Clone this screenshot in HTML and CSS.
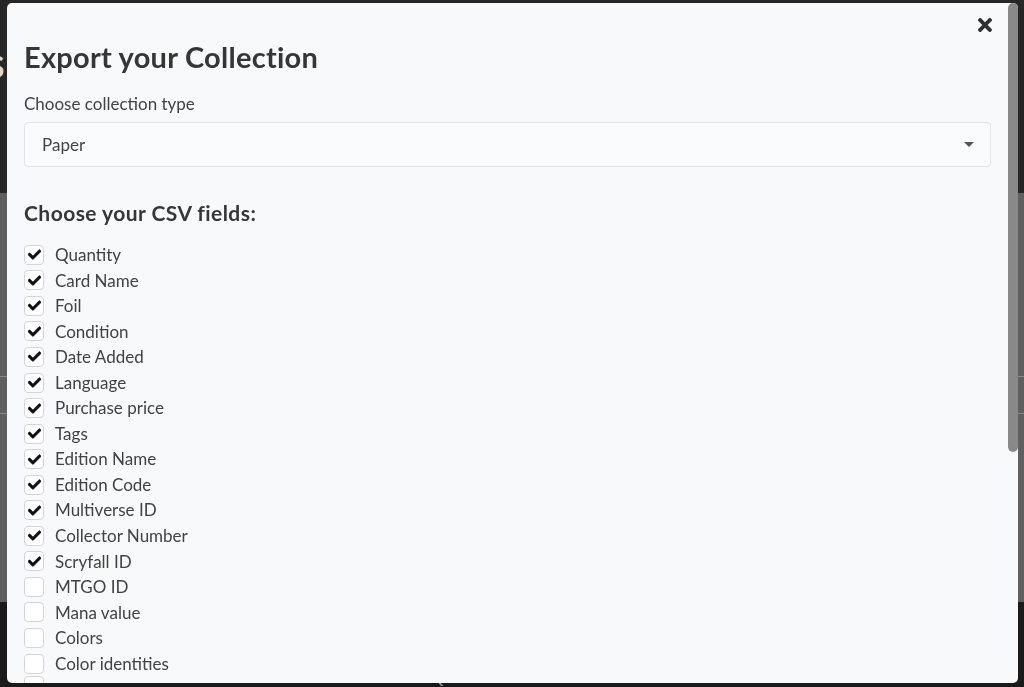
FILE: index.html
```html
<!DOCTYPE html>
<html lang="en">
<head>
    <meta charset="UTF-8">
    <meta name="viewport" content="width=device-width, initial-scale=1.0">
    <title>Export your Collection</title>
    <link rel="stylesheet" href="styles.css">
</head>
<body>
    <!-- page behind the modal -->
    <div class="page">
        <div class="page-top"><span class="page-logo">S</span></div>
        <div class="page-mid">
            <div class="page-row"></div>
            <div class="page-row"></div>
        </div>
        <div class="page-foot">
            <a>ABOUT</a>
            <a>FAQ</a>
            <a>CONTACT</a>
            <a>SUPPORT US</a>
        </div>
    </div>

    <div class="modal">
        <div class="modal-body">
            <button class="close" type="button" aria-label="Close">
                <svg viewBox="0 80 352 352" width="14" height="14"><path d="M242.72 256l100.07-100.07c12.28-12.28 12.28-32.19 0-44.48l-22.24-22.24c-12.28-12.28-32.19-12.28-44.480 0L176 189.28 75.93 89.21c-12.28-12.28-32.19-12.28-44.48 0L9.21 111.45c-12.28 12.28-12.28 32.19 0 44.48L109.28 256 9.21 356.07c-12.28 12.28-12.28 32.19 0 44.48l22.24 22.24c12.28 12.28 32.2 12.28 44.48 0L176 322.72l100.07 100.07c12.28 12.28 32.2 12.28 44.48 0l22.24-22.24c12.28-12.28 12.28-32.19 0-44.48L242.72 256z"/></svg>
            </button>

            <h3 class="modal-title">Export your Collection</h3>

            <label class="field-label">Choose collection type</label>
            <div class="select">
                <span>Paper</span>
                <span class="caret"></span>
            </div>

            <h4 class="section-title">Choose your CSV fields:</h4>
            <ul class="fields" id="fields">
                <!-- filled by the script below -->
            </ul>
        </div>
        <div class="scrollbar"><div class="thumb"></div></div>
    </div>

    <script>
        const fields = [
            ["Quantity", true], ["Card Name", true], ["Foil", true], ["Condition", true],
            ["Date Added", true], ["Language", true], ["Purchase price", true], ["Tags", true],
            ["Edition Name", true], ["Edition Code", true], ["Multiverse ID", true],
            ["Collector Number", true], ["Scryfall ID", true], ["MTGO ID", false],
            ["Mana value", false], ["Colors", false], ["Color identities", false],
            ["", false]
        ];
        const check = '<svg viewBox="0 0 512 512" width="13" height="13"><path d="M173.898 439.404l-166.4-166.4c-9.997-9.997-9.997-26.206 0-36.204l36.203-36.204c9.997-9.998 26.207-9.998 36.204 0L192 312.69 432.095 72.596c9.997-9.997 26.207-9.997 36.204 0l36.203 36.204c9.997 9.997 9.997 26.206 0 36.204l-294.4 294.401c-9.998 9.997-26.207 9.997-36.204-.001z"/></svg>';
        const list = document.getElementById("fields");
        fields.forEach(function(f) {
            const li = document.createElement("li");
            li.className = "field";
            li.innerHTML = '<span class="box">' + (f[1] ? check : "") + '</span><span>' + f[0] + '</span>';
            list.appendChild(li);
        });
    </script>
</body>
</html>
```

FILE: styles.css
```css
body {
    margin: 0;
    font-family: Lato, "Liberation Sans", sans-serif;
    background-color: #1b1b1b;
    overflow: hidden;
}
.page {
    height: 687px;
    display: flex;
    flex-direction: column;
}
.page-top {
    height: 200px;
    background-color: #272727;
    padding: 48px 0 0 0;
    box-sizing: border-box;
}
.page-logo {
    color: #d8d8d8;
    font-size: 30px;
    font-weight: 700;
    margin-left: -12px;
}
.page-mid {
    height: 420px;
    background-color: #5f5f5f;
    padding-top: 183px;
    box-sizing: border-box;
}
.page-row {
    height: 36px;
    border-top: 1px solid #8a8a8a;
}
.page-foot {
    flex: 1;
    background-color: #1a1a1a;
    display: flex;
    gap: 60px;
    padding: 63px 0 0 265px;
    color: #9a9a9a;
    font-size: 18px;
    letter-spacing: 3px;
}
.modal {
    position: fixed;
    top: 3px;
    left: 7px;
    width: 1011px;
    height: 680px;
    display: flex;
    background-color: #f8f9fa;
    border-radius: 5px;
    overflow: hidden;
    color: #424242;
}
.modal-body {
    flex: 1;
    position: relative;
    padding: 17px;
    overflow: hidden;
}
.scrollbar {
    width: 10px;
}
.thumb {
    height: 449px;
    background-color: #898989;
    border-radius: 5px;
}
.close {
    position: absolute;
    top: 15px;
    right: 16px;
    padding: 0;
    border: none;
    background: none;
    fill: #2f2f2f;
    line-height: 0;
    cursor: pointer;
}
.modal-title {
    margin: 20px 0 17px;
    font-size: 29px;
    line-height: 34px;
    font-weight: 700;
    letter-spacing: 0.25px;
    color: #363636;
}
.field-label {
    display: block;
    font-size: 17px;
    line-height: 25px;
    margin-bottom: 6px;
}
.select {
    height: 45px;
    box-sizing: border-box;
    border: 1px solid #e1e3e5;
    border-radius: 4px;
    background-color: #fafbfc;
    display: flex;
    align-items: center;
    justify-content: space-between;
    padding: 0 16px 0 17px;
    font-size: 17px;
    color: #454545;
}
.caret {
    width: 0;
    height: 0;
    border-left: 5px solid transparent;
    border-right: 5px solid transparent;
    border-top: 5px solid #555555;
}
.section-title {
    margin: 34px 0 17px;
    font-size: 21px;
    line-height: 24px;
    font-weight: 700;
    letter-spacing: 0.45px;
    color: #363636;
}
.fields {
    list-style: none;
    margin: 0;
    padding: 0;
}
.field {
    display: flex;
    align-items: center;
    gap: 11px;
    font-size: 17px;
    line-height: 25.55px;
}
.box {
    width: 20px;
    height: 20px;
    flex-shrink: 0;
    box-sizing: border-box;
    border: 1px solid #d3d5d8;
    border-radius: 4px;
    background-color: #ffffff;
    display: flex;
    align-items: center;
    justify-content: center;
    fill: #111111;
    stroke: #111111;
    stroke-width: 24px;
}
```
